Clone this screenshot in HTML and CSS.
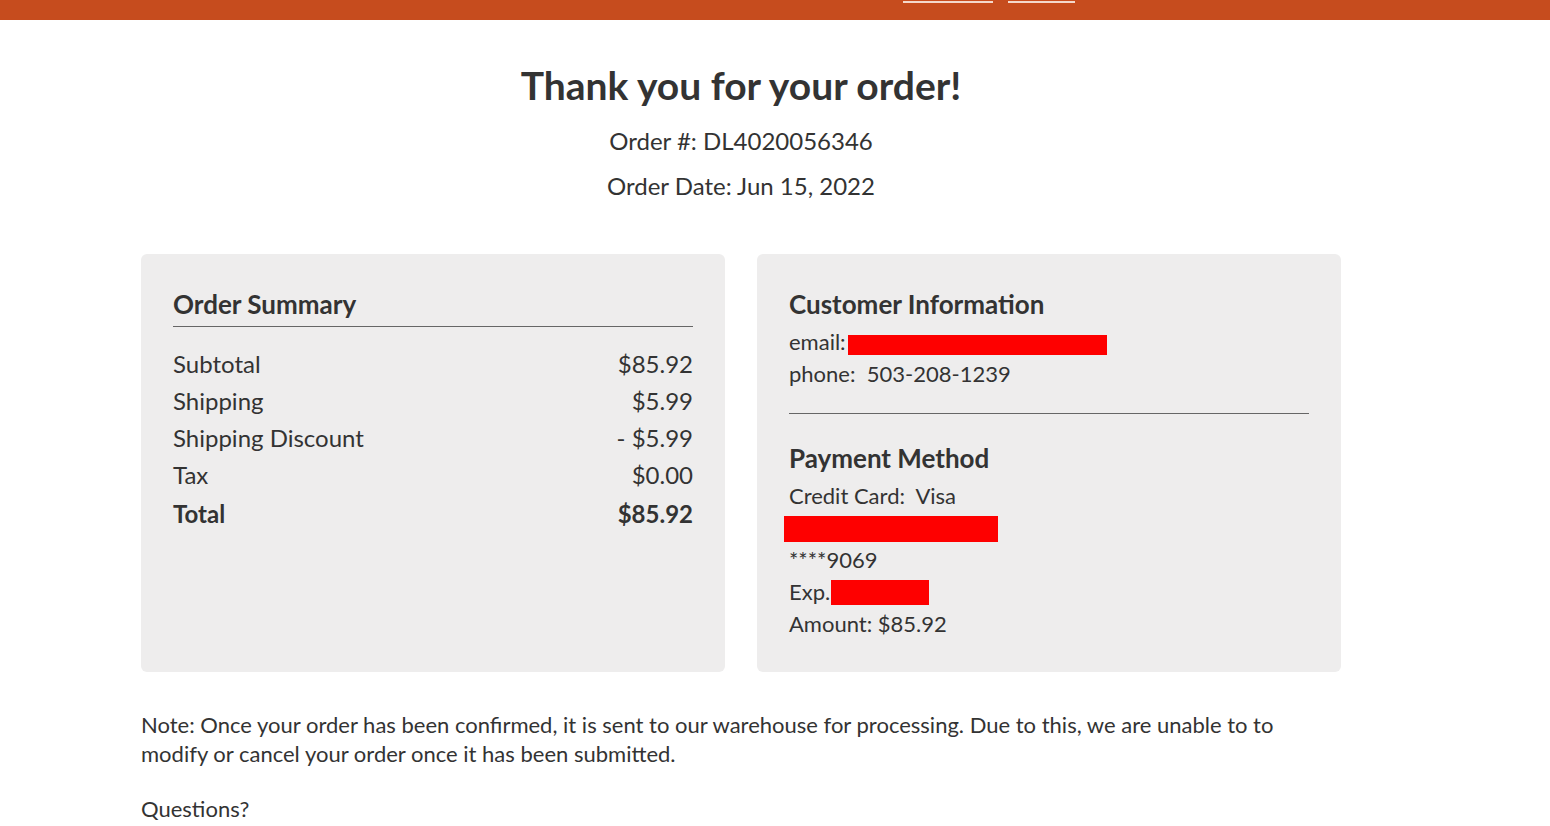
FILE: index.html
```html
<!DOCTYPE html>
<html lang="en">
<head>
<meta charset="utf-8">
<title>Order Confirmation</title>
<link rel="stylesheet" href="styles.css">
</head>
<body>
<div class="banner">
  <div class="banner-inner">
    <span class="banner-link wide" aria-hidden="true"></span>
    <span class="banner-link narrow" aria-hidden="true"></span>
  </div>
</div>
<div class="page">
  <header class="intro">
    <h1 class="title">Thank you for your order!</h1>
    <p class="meta">Order #: DL4020056346</p>
    <p class="meta">Order Date: Jun 15, 2022</p>
  </header>

  <main class="container">
    <div class="cards">
      <section class="card">
        <h2 class="card-title underlined">Order Summary</h2>
        <div class="rows">
          <div class="row"><span>Subtotal</span><span>$85.92</span></div>
          <div class="row"><span>Shipping</span><span>$5.99</span></div>
          <div class="row"><span>Shipping Discount</span><span>- $5.99</span></div>
          <div class="row"><span>Tax</span><span>$0.00</span></div>
          <div class="row total"><span>Total</span><span>$85.92</span></div>
        </div>
      </section>

      <section class="card">
        <h2 class="card-title">Customer Information</h2>
        <div class="line">email:<span class="redact redact-email"></span></div>
        <div class="line">phone:&nbsp; 503-208-1239</div>
        <hr class="divider">
        <h2 class="card-title">Payment Method</h2>
        <div class="line">Credit Card:&nbsp; Visa</div>
        <div class="line"><span class="redact redact-card"></span></div>
        <div class="line">****9069</div>
        <div class="line">Exp.<span class="redact redact-exp"></span></div>
        <div class="line">Amount: $85.92</div>
      </section>
    </div>

    <p class="note">Note: Once your order has been confirmed, it is sent to our warehouse for processing. Due to this, we are unable to to modify or cancel your order once it has been submitted.</p>
    <p class="note">Questions?</p>
  </main>
</div>
</body>
</html>
```

FILE: styles.css
```css
* {
  box-sizing: border-box;
}

html, body {
  margin: 0;
  padding: 0;
  background: #ffffff;
}

body {
  font-family: Lato, "Open Sans", "Liberation Sans", sans-serif;
  color: #333333;
}

.banner {
  height: 20px;
  background: #c64c1e;
}

.banner-inner {
  display: flex;
  gap: 15px;
  padding-left: 903px;
}

.banner-link {
  display: block;
  height: 3px;
  border-bottom: 2px solid #f4d9cc;
}

.banner-link.wide {
  width: 90px;
}

.banner-link.narrow {
  width: 67px;
}

.page {
  width: 1482px;
}

.intro {
  text-align: center;
  padding-top: 41px;
}

.title {
  margin: 0 0 9px;
  font-size: 39px;
  font-weight: 700;
  line-height: 48px;
  color: #333333;
}

.meta {
  margin: 0;
  font-size: 24px;
  line-height: 45px;
}

.container {
  width: 1200px;
  margin: 46px auto 0;
}

.cards {
  display: grid;
  grid-template-columns: 1fr 1fr;
  gap: 32px;
}

.card {
  background: #eeeded;
  border-radius: 6px;
  padding: 34px 32px 32px;
}

.card-title {
  margin: 0;
  font-size: 26px;
  font-weight: 700;
  line-height: 32px;
  color: #333333;
  margin-bottom: 6px;
}

.card-title.underlined {
  padding-bottom: 6px;
  margin-bottom: 18px;
  border-bottom: 1px solid #666666;
}

.rows {
  display: flex;
  flex-direction: column;
}

.row {
  display: flex;
  justify-content: space-between;
  font-size: 24px;
  line-height: 37px;
}

.row.total {
  font-weight: 700;
  margin-top: 2px;
}

.line {
  font-size: 22px;
  height: 32px;
  line-height: 32px;
  display: flex;
  align-items: center;
  white-space: pre;
}

.divider {
  border: 0;
  border-top: 1px solid #666666;
  margin: 23px 0 28px;
}

.redact {
  display: inline-block;
  background: #fe0000;
}

.redact-email {
  width: 259px;
  height: 20px;
  margin-left: 2px;
  margin-top: 5px;
}

.redact-card {
  width: 214px;
  height: 26px;
  margin-left: -5px;
  margin-top: 2px;
}

.redact-exp {
  width: 98px;
  height: 25px;
  margin-left: 1px;
}

.note {
  margin: 38px 0 0;
  font-size: 22px;
  line-height: 29px;
}

.note + .note {
  margin-top: 26px;
}
```
